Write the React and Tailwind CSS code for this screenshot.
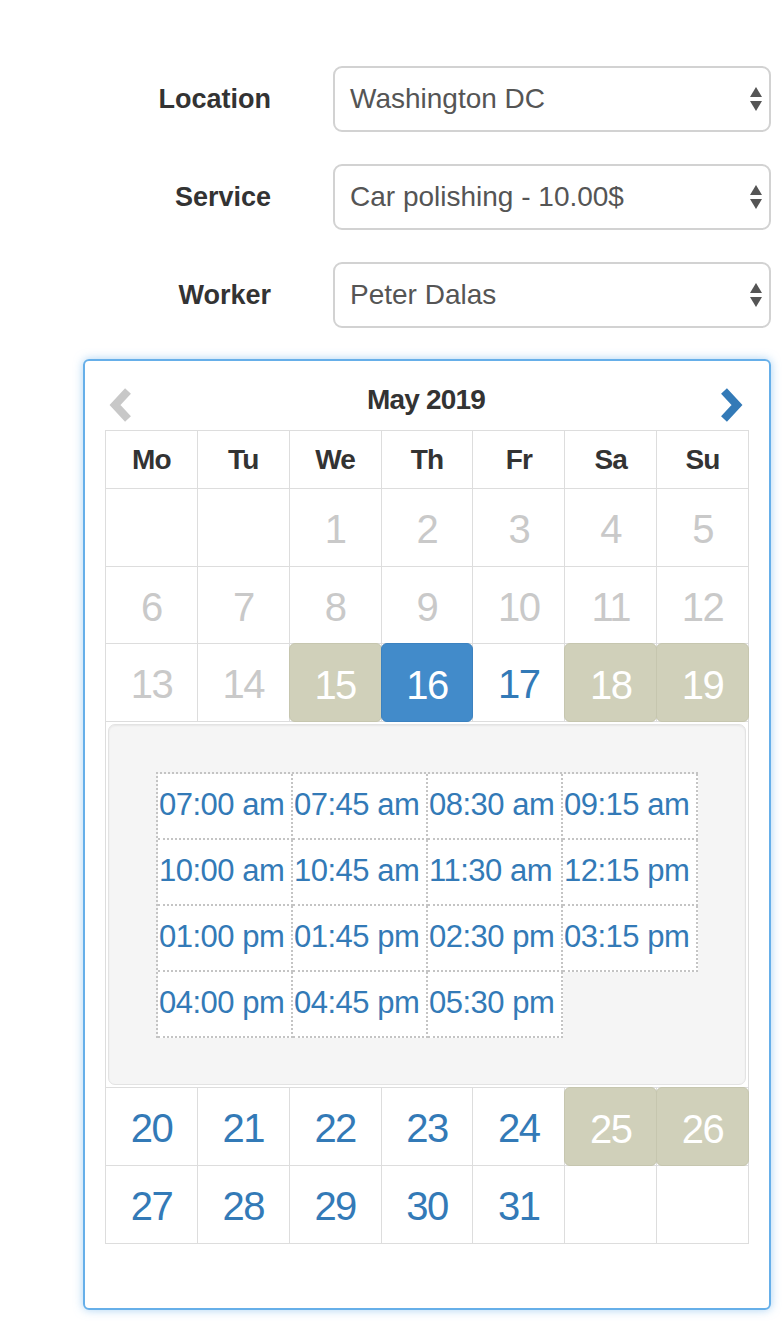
import React from "react";

const font = { fontFamily: '"Liberation Sans", Arial, Helvetica, sans-serif' };

function SelectArrows() {
  return (
    <svg width="14" height="26" viewBox="0 0 14 26" className="shrink-0">
      <polygon points="7,1 13,11 1,11" fill="#555" />
      <polygon points="1,15 13,15 7,25" fill="#555" />
    </svg>
  );
}

function FieldRow({ label, value, last }) {
  return (
    <div className={`flex items-center ${last ? "" : "mb-[32px]"}`}>
      <label className="w-[271px] text-right text-[27px] font-bold text-[#333]">{label}</label>
      <div className="ml-[62px] w-[438px] h-[66px] border-2 border-[#d2d2d2] rounded-[9px] bg-white flex items-center justify-between pl-[15px] pr-[6px]">
        <span className="text-[28px] text-[#555] whitespace-nowrap">{value}</span>
        <SelectArrows />
      </div>
    </div>
  );
}

function Chevron({ dir, color }) {
  const d = dir === "left" ? "M21 4 L8 18 L21 32" : "M5 4 L18 18 L5 32";
  return (
    <svg width="26" height="36" viewBox="0 0 26 36">
      <path d={d} fill="none" stroke={color} strokeWidth="8" strokeLinejoin="miter" strokeLinecap="butt" />
    </svg>
  );
}

const weekdays = ["Mo", "Tu", "We", "Th", "Fr", "Sa", "Su"];

// kinds: off = past/disabled, open = bookable, busy = unavailable weekend, sel = chosen date
const weeksTop = [
  [null, null, ["1", "off"], ["2", "off"], ["3", "off"], ["4", "off"], ["5", "off"]],
  [["6", "off"], ["7", "off"], ["8", "off"], ["9", "off"], ["10", "off"], ["11", "off"], ["12", "off"]],
  [["13", "off"], ["14", "off"], ["15", "busy"], ["16", "sel"], ["17", "open"], ["18", "busy"], ["19", "busy"]],
];
const weeksBottom = [
  [["20", "open"], ["21", "open"], ["22", "open"], ["23", "open"], ["24", "open"], ["25", "busy"], ["26", "busy"]],
  [["27", "open"], ["28", "open"], ["29", "open"], ["30", "open"], ["31", "open"], null, null],
];

const times = [
  "07:00 am", "07:45 am", "08:30 am", "09:15 am",
  "10:00 am", "10:45 am", "11:30 am", "12:15 pm",
  "01:00 pm", "01:45 pm", "02:30 pm", "03:15 pm",
  "04:00 pm", "04:45 pm", "05:30 pm",
];

function DayCell({ day }) {
  if (!day) return <div className="border-r border-b border-[#ddd]" />;
  const [n, kind] = day;
  if (kind === "busy" || kind === "sel") {
    const bg = kind === "sel" ? "bg-[#428bca] border-[#3c82c0]" : "bg-[#d0d0ba] border-[#c6c6af]";
    return (
      <div className="border-r border-b border-[#ddd] relative">
        <div className={`absolute -left-px -top-px -right-px -bottom-px rounded-[6px] border ${bg} flex items-center justify-center pt-[4px] text-white text-[40px] tracking-[-1.5px]`}>
          {n}
        </div>
      </div>
    );
  }
  const color = kind === "off" ? "text-[#c9c9c9]" : "text-[#337ab7]";
  return (
    <div className={`border-r border-b border-[#ddd] flex items-center justify-center pt-[3px] text-[40px] tracking-[-1.5px] ${color}`}>
      {n}
    </div>
  );
}

function WeekRow({ week, h }) {
  return (
    <div className={`grid grid-cols-7 ${h}`}>
      {week.map((d, i) => (
        <DayCell key={i} day={d} />
      ))}
    </div>
  );
}

export default function App() {
  return (
    <div className="w-[782px] min-h-[1339px] bg-white pt-[66px]" style={font}>
      <FieldRow label="Location" value="Washington DC" />
      <FieldRow label="Service" value="Car polishing - 10.00$" />
      <FieldRow label="Worker" value="Peter Dalas" last />

      <div className="mt-[31px] ml-[83px] w-[688px] h-[951px] border-2 border-[#66afe9] rounded-[6px] shadow-[0_0_10px_rgba(102,175,233,0.55)] px-[20px] pt-[19px]">
        <div className="h-[50px] flex items-center justify-between pl-[2px] pr-[4px]">
          <Chevron dir="left" color="#c8c8c8" />
          <span className="text-[28px] font-bold text-[#333] -mt-[10px] tracking-[-0.8px]">May 2019</span>
          <Chevron dir="right" color="#337ab7" />
        </div>

        <div className="border-l border-t border-[#ddd]">
          <div className="grid grid-cols-7 h-[58px]">
            {weekdays.map((w) => (
              <div key={w} className="border-r border-b border-[#ddd] flex items-center justify-center text-[28px] font-bold text-[#333] tracking-[-0.8px]">
                {w}
              </div>
            ))}
          </div>
          <WeekRow week={weeksTop[0]} h="h-[78px]" />
          <WeekRow week={weeksTop[1]} h="h-[77px]" />
          <WeekRow week={weeksTop[2]} h="h-[78px]" />

          <div className="border-r border-b border-[#ddd] p-[2px] h-[366px]">
            <div className="h-full bg-[#f5f5f5] border border-[#e3e3e3] rounded-[7px] shadow-[inset_0_1px_2px_rgba(0,0,0,0.06)] flex items-center justify-center">
              <div className="grid grid-cols-4 w-fit border-l-2 border-t-2 border-dotted border-[#c4c4c4]">
                {times.map((t) => (
                  <div key={t} className="w-[135px] h-[66px] bg-white border-r-2 border-b-2 border-dotted border-[#c4c4c4] flex items-center pl-[1px] text-[31px] text-[#337ab7] whitespace-nowrap tracking-[-0.5px]">
                    {t}
                  </div>
                ))}
              </div>
            </div>
          </div>

          <WeekRow week={weeksBottom[0]} h="h-[78px]" />
          <WeekRow week={weeksBottom[1]} h="h-[78px]" />
        </div>
      </div>
    </div>
  );
}
